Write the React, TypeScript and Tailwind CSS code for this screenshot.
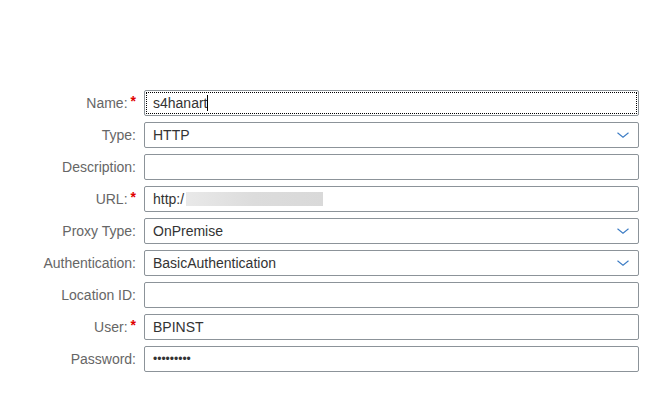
import React from "react";

const Chevron = () => (
  <svg width="12" height="6" viewBox="0 0 12 6" className="shrink-0">
    <path d="M0.5 0.8 L6 5.2 L11.5 0.8" fill="none" stroke="#3b7bc4" strokeWidth="1.1" />
  </svg>
);

type Row = {
  label: string;
  required?: boolean;
  value?: React.ReactNode;
  select?: boolean;
  focus?: boolean;
};

const rows: Row[] = [
  { label: "Name:", required: true, value: "s4hanart", focus: true },
  { label: "Type:", value: "HTTP", select: true },
  { label: "Description:" },
  { label: "URL:", required: true, value: "url" },
  { label: "Proxy Type:", value: "OnPremise", select: true },
  { label: "Authentication:", value: "BasicAuthentication", select: true },
  { label: "Location ID:" },
  { label: "User:", required: true, value: "BPINST" },
  { label: "Password:", value: "pw" },
];

export default function App() {
  return (
    <div
      className="w-[647px] h-[401px] bg-white pt-[90px]"
      style={{ fontFamily: '"Liberation Sans", Arial, sans-serif' }}
    >
      <div className="flex flex-col gap-[6px]">
        {rows.map((r) => (
          <div key={r.label} className="flex items-center h-[26px]">
            <div className="w-[136px] shrink-0 flex justify-end items-center text-[14px] text-[#666666]">
              <span>{r.label}</span>
              {r.required && (
                <span className="text-[#e00000] ml-[3px] text-[14px] font-bold leading-none relative top-[-2px]">*</span>
              )}
            </div>
            <div className="ml-[8px] w-[495px] h-[26px] border border-[#8c9399] rounded-[2px] bg-white flex items-center relative">
              {r.focus && (
                <div className="absolute inset-[1px] border border-dotted border-black pointer-events-none" />
              )}
              <div className="flex-1 pl-[8px] text-[14px] text-[#333333] flex items-center">
                {r.value === "url" ? (
                  <>
                    <span>http:/</span>
                    <span className="inline-block w-[137px] h-[14px] ml-[2px] bg-gradient-to-r from-[#e9e9e9] via-[#dcdcdc] to-[#d9d9d9]" />
                  </>
                ) : r.value === "pw" ? (
                  <span className="text-[12px] text-[#333333]">•••••••••</span>
                ) : r.focus ? (
                  <>
                    <span>{r.value}</span>
                    <span className="inline-block w-[1px] h-[16px] bg-black" />
                  </>
                ) : (
                  <span>{r.value}</span>
                )}
              </div>
              {r.select && (
                <div className="pr-[9px] flex items-center">
                  <Chevron />
                </div>
              )}
            </div>
          </div>
        ))}
      </div>
    </div>
  );
}
